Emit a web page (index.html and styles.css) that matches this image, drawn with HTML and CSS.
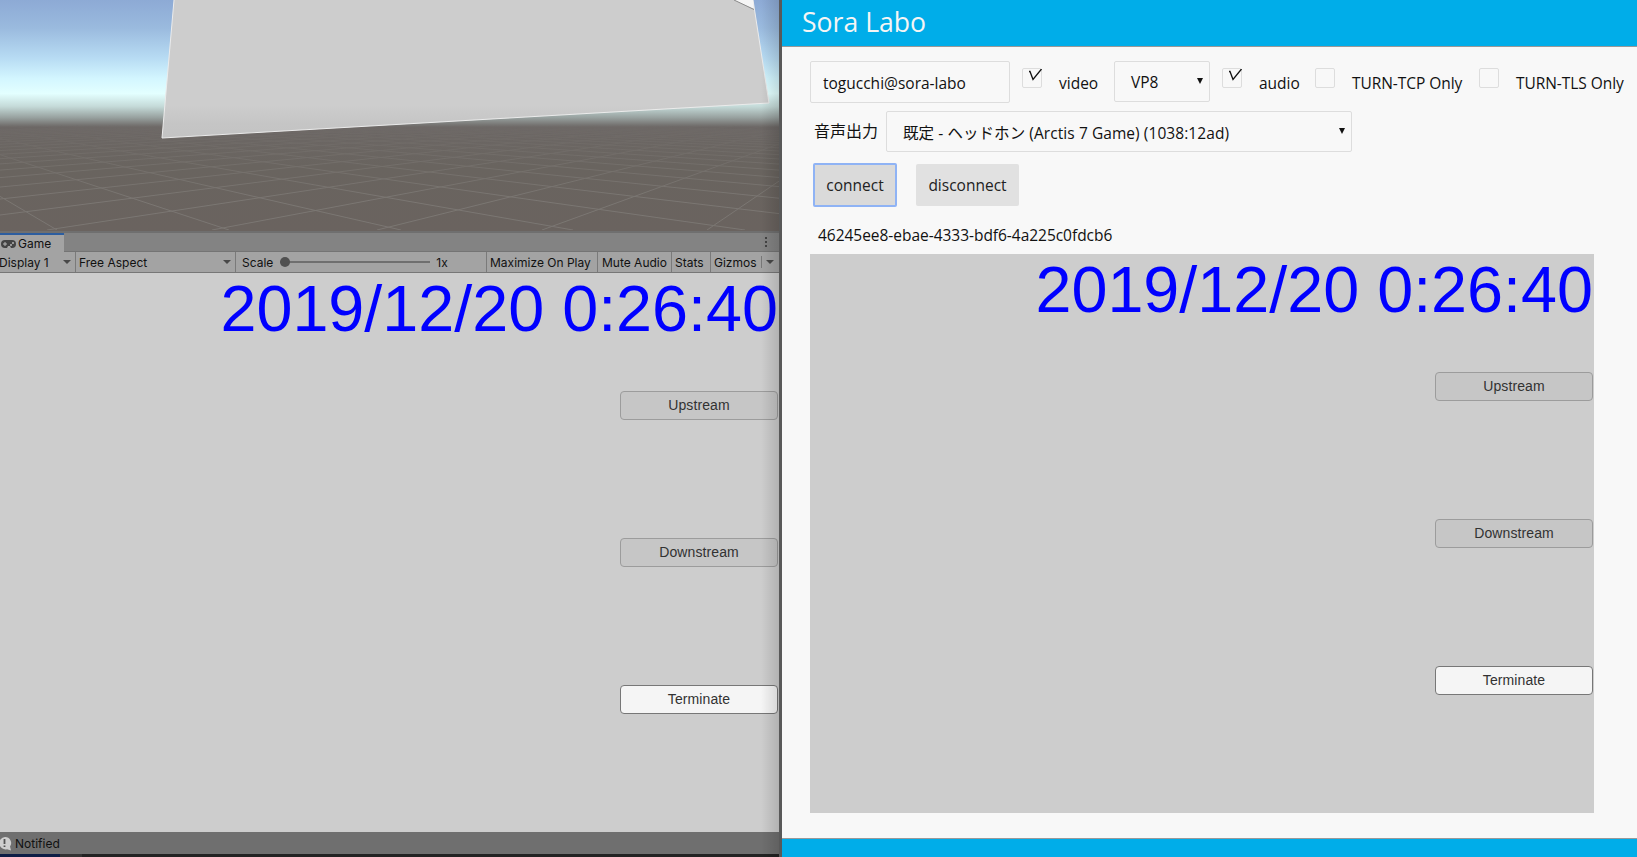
FILE: index.html
```html
<!DOCTYPE html>
<html lang="ja">
<head>
    <meta charset="UTF-8">
    <meta name="viewport" content="width=device-width, initial-scale=1.0">
    <title>Sora Labo</title>
    <link rel="stylesheet" href="styles.css">
</head>
<body>
    <div class="editor">
        <svg class="scene" width="779" height="231" viewBox="0 0 779 231">
            <defs>
                <linearGradient id="sky" x1="0" y1="0" x2="0" y2="231" gradientUnits="userSpaceOnUse">
                    <stop offset="0" stop-color="#8daad5"/>
                    <stop offset="0.12" stop-color="#9abade"/>
                    <stop offset="0.25" stop-color="#b7dbf3"/>
                    <stop offset="0.34" stop-color="#d3f6ff"/>
                    <stop offset="0.405" stop-color="#e3ffff"/>
                    <stop offset="0.46" stop-color="#c5dbd9"/>
                    <stop offset="0.51" stop-color="#97a09e"/>
                    <stop offset="0.55" stop-color="#6c6765"/>
                    <stop offset="0.72" stop-color="#69645f"/>
                    <stop offset="1" stop-color="#6a635f"/>
                </linearGradient>
                <linearGradient id="plane" x1="0" y1="0" x2="0" y2="138" gradientUnits="userSpaceOnUse">
                    <stop offset="0.76" stop-color="#cdcdcd"/>
                    <stop offset="0.9" stop-color="#c5c5c5"/>
                    <stop offset="1" stop-color="#c3c3c3"/>
                </linearGradient>
                <linearGradient id="fade" x1="0" y1="125" x2="0" y2="200" gradientUnits="userSpaceOnUse">
                    <stop offset="0" stop-color="#fff" stop-opacity="0.1"/>
                    <stop offset="1" stop-color="#fff" stop-opacity="0.9"/>
                </linearGradient>
                <mask id="gridMask" maskUnits="userSpaceOnUse" x="0" y="125" width="779" height="105">
                    <rect y="125" width="779" height="105" fill="url(#fade)"/>
                </mask>
            </defs>
            <rect width="779" height="231" fill="url(#sky)"/>
            <g id="grid" mask="url(#gridMask)" stroke="#7d7975" stroke-width="1"></g>
            <path d="M174 0 L162 138 L769 103 L753 0 Z" fill="url(#plane)"/>
            <path d="M174 0 L162 138 L769 103 L753 0" fill="none" stroke="#ebebeb"/>
            <path d="M734 0 L754 9 L753 0 Z" fill="#f5f5f5"/>
            <path d="M734 0 L754 9.500" stroke="#8a8a8a" fill="none"/>
        </svg>
        <div class="tab-bar">
            <div class="tab">
                <svg width="15" height="8" viewBox="0 0 15 8">
                    <rect width="15" height="8" rx="4" fill="#444"/>
                    <path d="M2 4h4M4 2v4" stroke="#b5b5b5"/>
                    <circle cx="10" cy="5" r="1" fill="#b5b5b5"/>
                    <circle cx="12" cy="3" r="1" fill="#b5b5b5"/>
                    <path d="M6 8l1-2h2l1 2z" fill="#a5a5a5"/>
                </svg>
                <span>Game</span>
            </div>
            <div class="kebab"><i></i><i></i><i></i></div>
        </div>
        <div class="toolbar">
            <div class="tool display">Display 1<i class="arrow"></i></div>
            <div class="tool aspect">Free Aspect<i class="arrow"></i></div>
            <div class="tool scale">Scale<span class="slider"><i></i></span>1x</div>
            <div class="tool maximize">Maximize On Play</div>
            <div class="tool mute">Mute Audio</div>
            <div class="tool stats">Stats</div>
            <div class="tool gizmos">Gizmos<span class="split"></span><i class="arrow"></i></div>
        </div>
        <div class="game">
            <div class="clock">2019/12/20 0:26:40</div>
            <button class="game-btn off">Upstream</button>
            <button class="game-btn off">Downstream</button>
            <button class="game-btn">Terminate</button>
        </div>
        <div class="status">
            <svg width="12" height="15" viewBox="0 0 12 15">
                <path d="M5 1a6 6 0 0 1 5 9.500l1 4-4-1.300A6.200 6.200 0 1 1 5 1z" fill="#cfcfcf"/>
                <path d="M4.500 3v5M4.500 9.500v1.500" stroke="#555" stroke-width="1.800"/>
            </svg>
            <span>Notified</span>
        </div>
        <div class="taskbar"></div>
    </div>

    <div class="labo">
        <header>Sora Labo</header>
        <main>
            <div class="row options">
                <input class="channel" type="text" value="togucchi@sora-labo">
                <span class="check"><svg width="15" height="13" viewBox="0 0 15 13"><path d="M1 2.500L2 2.500L5 10.500L13.500 0" fill="none" stroke="#111" stroke-width="1.300"/></svg></span>
                <label class="w-video">video</label>
                <div class="select codec">VP8<i class="caret"></i></div>
                <span class="check"><svg width="15" height="13" viewBox="0 0 15 13"><path d="M1 2.500L2 2.500L5 10.500L13.500 0" fill="none" stroke="#111" stroke-width="1.300"/></svg></span>
                <label class="w-audio">audio</label>
                <span class="check"></span>
                <label class="w-turn">TURN-TCP Only</label>
                <span class="check"></span>
                <label class="w-turn">TURN-TLS Only</label>
            </div>
            <div class="row output">
                <label>音声出力</label>
                <div class="select device"><span>既定 - ヘッドホン (Arctis 7 Game) (1038:12ad)</span><i class="caret"></i></div>
            </div>
            <div class="row actions">
                <button class="btn focused">connect</button>
                <button class="btn disconnect">disconnect</button>
            </div>
            <p class="client-id">46245ee8-ebae-4333-bdf6-4a225c0fdcb6</p>
            <div class="game video">
                <div class="clock">2019/12/20 0:26:40</div>
                <button class="game-btn off">Upstream</button>
                <button class="game-btn off">Downstream</button>
                <button class="game-btn">Terminate</button>
            </div>
        </main>
        <footer></footer>
    </div>

    <script>
        // ground grid: two sets of lines, each running to its own vanishing point
        const grid = document.getElementById('grid');

        function addLine(x1, y1, x2, y2) {
            const line = document.createElementNS('http://www.w3.org/2000/svg', 'line');
            line.setAttribute('x1', x1);
            line.setAttribute('y1', y1);
            line.setAttribute('x2', x2);
            line.setAttribute('y2', y2);
            grid.appendChild(line);
        }

        for (let i = 0; i < 24; i++) {
            addLine(-160, 102, 57 + 172 * i, 230);
            addLine(897, 101, 707 - 165 * i, 230);
        }
    </script>
</body>
</html>
```
FILE: styles.css
```css
* {
    margin: 0;
    padding: 0;
    box-sizing: border-box;
}

body {
    display: flex;
    width: 1637px;
    height: 857px;
    overflow: hidden;
    background: #f8f8f8;
}

/* Unity editor */
.editor {
    width: 782px;
    height: 857px;
    display: flex;
    flex-direction: column;
    border-right: 3px solid #595959;
    background: #6f6f6f;
    font-family: Inter, sans-serif;
    font-size: 12px;
    color: #111;
    position: relative;
}

/* shadow cast by the browser window */
.editor::after {
    content: "";
    position: absolute;
    top: 0;
    right: 0;
    width: 18px;
    height: 857px;
    background: linear-gradient(to right, rgba(0, 0, 0, 0), rgba(0, 0, 0, 0.13));
}

.scene {
    display: block;
    flex: none;
}

.tab-bar {
    margin-top: 2px;
    height: 19px;
    display: flex;
    justify-content: space-between;
    background: #838383;
    border-bottom: 1px solid #747474;
}

.tab {
    width: 64px;
    height: 19px;
    padding-left: 1px;
    display: flex;
    align-items: center;
    gap: 2px;
    background: #a3a3a3;
    border-top: 2px solid #2c5d9f;
}

.kebab {
    width: 16px;
    margin-right: 5px;
    display: flex;
    flex-direction: column;
    align-items: center;
    justify-content: center;
    gap: 2px;
}

.kebab i {
    width: 2px;
    height: 2px;
    background: #444;
}

.toolbar {
    height: 21px;
    display: flex;
    background: #a3a3a3;
    border-bottom: 1px solid #777;
}

.tool {
    display: flex;
    align-items: center;
    border-right: 1px solid #7a7a7a;
    padding-left: 4px;
    white-space: nowrap;
}

.arrow {
    margin-left: auto;
    margin-right: 4px;
    border: 4px solid transparent;
    border-top: 4px solid #484848;
    border-bottom: 0;
}

.display {
    width: 76px;
    padding-left: 0;
    text-indent: -1px;
}

.aspect {
    width: 160px;
    padding-left: 3px;
}

.scale {
    width: 251px;
    padding-left: 6px;
}

.slider {
    width: 150px;
    height: 2px;
    margin: 0 6px 0 7px;
    background: #6f6f6f;
    display: flex;
    align-items: center;
}

.slider i {
    width: 10px;
    height: 10px;
    border-radius: 50%;
    background: #505050;
}

.maximize {
    width: 111px;
    padding-left: 3px;
}

.mute {
    width: 74px;
}

.stats {
    width: 39px;
    padding-left: 3px;
}

.gizmos {
    width: 68px;
    padding-left: 3px;
    border-right: 0;
}

.gizmos .arrow {
    margin-right: 5px;
}

.split {
    width: 1px;
    height: 12px;
    margin-left: 4px;
    background: #777;
}

.game {
    height: 559px;
    padding-right: 1px;
    display: flex;
    flex-direction: column;
    align-items: flex-end;
    background: #cdcdcd;
}

.clock {
    height: 118px;
    font-family: "Liberation Sans", Arial, sans-serif;
    font-size: 64.7px;
    line-height: 72px;
    color: #0000ff;
    white-space: nowrap;
}

.game-btn {
    width: 158px;
    height: 29px;
    margin-bottom: 118px;
    padding-bottom: 1px;
    border: 1px solid #777;
    border-radius: 4px;
    background: #f5f5f5;
    font-family: "Liberation Sans", Arial, sans-serif;
    font-size: 14px;
    letter-spacing: 0.1px;
    color: #323232;
}

.game-btn.off {
    background: #c6c6c6;
    border-color: #9c9c9c;
}

.status {
    height: 22px;
    display: flex;
    align-items: center;
    gap: 3px;
}

.taskbar {
    height: 3px;
    background: linear-gradient(to right, #0d1d45 60px, #333 60px, #333 82px, #222 82px);
}

/* Sora Labo page */
.labo {
    width: 855px;
    height: 857px;
    display: flex;
    flex-direction: column;
    font-family: "Open Sans", "Noto Sans CJK JP", sans-serif;
    font-size: 15.5px;
    color: #111;
}

header {
    height: 47px;
    padding-left: 20px;
    background: #00ade9;
    border-bottom: 1px solid #999;
    font-size: 26.6px;
    line-height: 44px;
    color: #f5f5f5;
}

main {
    flex: 1;
    padding: 14px 0 0 28px;
}

footer {
    height: 19px;
    background: #00ade9;
    border-top: 1px solid #999;
}

.row {
    display: flex;
    white-space: nowrap;
}

.options {
    height: 50px;
}

.channel {
    width: 200px;
    height: 42px;
    padding: 1px 0 0 12px;
    border: 1px solid #ddd;
    border-radius: 2px;
    background: #f8f8f8;
    font: inherit;
    color: inherit;
}

.check {
    width: 20px;
    height: 20px;
    margin: 7px 17px 0 12px;
    padding-left: 5px;
    border: 1px solid #ddd;
    border-radius: 2px;
}

.check svg {
    display: block;
}

.options label {
    line-height: 44px;
}

.w-video {
    width: 55px;
}

.w-audio {
    width: 44px;
}

.w-turn {
    width: 115px;
    letter-spacing: -0.05px;
}

.select {
    height: 41px;
    padding: 1px 6px 0 16px;
    display: flex;
    align-items: center;
    justify-content: space-between;
    border: 1px solid #ddd;
    border-radius: 2px;
}

.codec {
    width: 96px;
}

.caret {
    margin-bottom: 3px;
    border: 3px solid transparent;
    border-top: 6px solid #111;
    border-bottom: 0;
}

.output {
    height: 52px;
    padding-left: 4px;
}

.output label {
    width: 72px;
    font-size: 16px;
    line-height: 41px;
}

.device {
    width: 466px;
    letter-spacing: 0.07px;
}

.actions {
    height: 44px;
    padding-left: 3px;
    align-items: center;
}

.btn {
    width: 84px;
    height: 44px;
    border: 0;
    border-radius: 2px;
    background: #e1e1e1;
    font: inherit;
    color: #222;
}

.btn.focused {
    border: 2px solid #8fb3f5;
    background: #dadada;
}

.btn.disconnect {
    width: 103px;
    height: 42px;
    margin-left: 19px;
}

.client-id {
    height: 47px;
    padding-left: 8px;
    line-height: 56px;
    letter-spacing: -0.03px;
}

.video {
    width: 784px;
}
```
